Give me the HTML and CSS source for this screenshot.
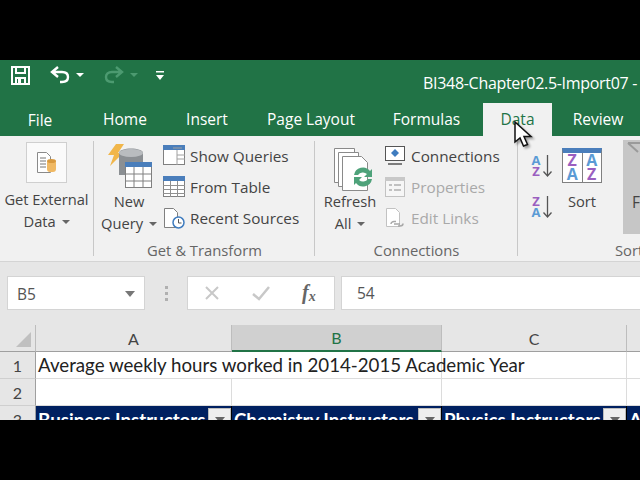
FILE: index.html
```html
<!DOCTYPE html>
<html lang="en">

<head>
    <meta charset="UTF-8">
    <title>BI348-Chapter02.5-Import07 - Excel</title>
    <link rel="stylesheet" href="styles.css">
</head>

<body>
    <div class="window">
        <!-- title bar -->
        <div class="titlebar">
            <div class="qat">
                <svg class="qat-save" width="21" height="20" viewBox="0 0 21 20"><path d="M2 2h17v17H2zM6 2v6h9V2M6 19v-6h9v6" fill="none" stroke="#fff" stroke-width="2"/><rect x="8" y="14" width="3" height="4" fill="#fff"/></svg>
                <svg class="qat-undo" width="22" height="20" viewBox="0 0 22 20"><path d="M9 2 3 7l6 5M3 7h10c4 0 6 2 6 5s-2 5-6 5h-2" fill="none" stroke="#fff" stroke-width="2.4"/></svg>
                <span class="qat-drop"></span>
                <svg class="qat-redo" width="22" height="20" viewBox="0 0 22 20"><path d="M13 2l6 5-6 5M19 7H9c-4 0-6 2-6 5s2 5 6 5h2" fill="none" stroke="#4c9a70" stroke-width="2.4"/></svg>
                <span class="qat-drop dim"></span>
                <svg class="qat-custom" width="10" height="11" viewBox="0 0 10 11"><path d="M1 1h8v1.500H1zM1 5h8L5 10z" fill="#fff"/></svg>
            </div>
            <div class="doc-title">BI348-Chapter02.5-Import07 -</div>
        </div>

        <!-- tabs -->
        <div class="tabs">
            <div class="tab tab-file">File</div>
            <div class="tab tab-home">Home</div>
            <div class="tab tab-insert">Insert</div>
            <div class="tab tab-layout">Page Layout</div>
            <div class="tab tab-formulas">Formulas</div>
            <div class="tab tab-data">Data</div>
            <div class="tab tab-review">Review</div>
        </div>

        <!-- ribbon -->
        <div class="ribbon">
            <div class="group group-external">
                <div class="group-body">
                    <div class="big-btn">
                        <div class="ext-box">
                            <svg width="22" height="24" viewBox="0 0 22 24"><path d="M1.500 1.500h9l4 4v16h-13z" fill="#fff" stroke="#8a8a8a"/><path d="M4 7h6M4 10h6M4 13h6M4 16h6" stroke="#777"/><rect x="11" y="9" width="9" height="12" rx="3" fill="#f0b964"/><ellipse cx="15.500" cy="10" rx="4.500" ry="2" fill="#d99a3f"/></svg>
                        </div>
                        <div class="big-label">Get External</div>
                        <div class="big-label">Data <span class="caret"></span></div>
                    </div>
                </div>
            </div>

            <div class="group group-transform">
                <div class="group-body">
                    <div class="big-btn query-btn">
                        <svg class="big-icon" width="46" height="46" viewBox="0 0 46 46"><path d="M9 1h8l-6 9h5L3 23l4-11H1z" fill="#f1b64a"/><path d="M12 10c0-6 24-6 24 0v22H12z" fill="#8b8f93"/><ellipse cx="24" cy="10" rx="12" ry="4" fill="#b9bcbf"/><rect x="18.500" y="19.500" width="26" height="25" fill="#fff" stroke="#808080"/><rect x="18" y="19" width="27" height="5" fill="#4a7ebb"/><path d="M18 31h27M18 38h27M27 24v20M36 24v20" stroke="#808080"/></svg>
                        <div class="big-label">New</div>
                        <div class="big-label">Query <span class="caret"></span></div>
                    </div>
                    <div class="small-list">
                        <div class="small-row">
                            <svg width="22" height="21" viewBox="0 0 22 21"><rect x=".5" y=".5" width="21" height="19" fill="#fff" stroke="#808080"/><rect width="22" height="5" fill="#4a7ebb"/><path d="M14 5v15M14 10h8M14 14h8M10 3h9" stroke="#a0a0a0"/></svg>
                            <span>Show Queries</span>
                        </div>
                        <div class="small-row">
                            <svg width="22" height="21" viewBox="0 0 22 21"><rect x=".5" y=".5" width="21" height="20" fill="#fff" stroke="#808080"/><rect width="22" height="5" fill="#4a7ebb"/><path d="M0 9.500h22M0 13.500h22M0 17.500h22M7.500 5v16M14.500 5v16" stroke="#909090"/></svg>
                            <span>From Table</span>
                        </div>
                        <div class="small-row">
                            <svg width="22" height="22" viewBox="0 0 22 22"><path d="M1.500 1.500h9l4 4v15h-13z" fill="#fff" stroke="#808080"/><circle cx="15.500" cy="15.500" r="5.500" fill="#fff" stroke="#3f7cbf" stroke-width="1.500"/><path d="M15.500 12v4h3" fill="none" stroke="#555"/></svg>
                            <span>Recent Sources</span>
                        </div>
                    </div>
                </div>
                <div class="group-label">Get &amp; Transform</div>
            </div>

            <div class="group group-connections">
                <div class="group-body">
                    <div class="big-btn refresh-btn">
                        <svg class="big-icon" width="42" height="44" viewBox="0 0 42 44"><path d="M1.500 1.500h20v34h-20z" fill="#fff" stroke="#8a8a8a"/><path d="M5.500 5.500h20v34h-20z" fill="#fff" stroke="#8a8a8a"/><path d="M9.500 9.500h19l6 6v28h-25z" fill="#fff" stroke="#8a8a8a"/><path d="M21 28a9 9 0 0 1 16-4l2-2v8h-8l3-3a6 6 0 0 0-9 1zM39 32a9 9 0 0 1-16 4l-2 2v-8h8l-3 3a6 6 0 0 0 9-1z" fill="#4ea27a"/></svg>
                        <div class="big-label">Refresh</div>
                        <div class="big-label">All <span class="caret"></span></div>
                    </div>
                    <div class="small-list">
                        <div class="small-row">
                            <svg width="20" height="19" viewBox="0 0 20 19"><rect x=".5" y=".5" width="19" height="14" fill="#fff" stroke="#555"/><path d="M3 18h14" stroke="#555" stroke-width="1.500"/><path d="M10 3l4 4-4 4-4-4z" fill="#3f7cbf"/></svg>
                            <span>Connections</span>
                        </div>
                        <div class="small-row off">
                            <svg width="20" height="20" viewBox="0 0 20 20"><rect x=".5" y=".5" width="19" height="19" fill="#f6f6f6" stroke="#c2c2c2"/><rect width="20" height="4" fill="#c8c8c8"/><path d="M4 8h3M4 13h3M9 8h7M9 13h7" stroke="#b0b0b0" stroke-width="1.500"/></svg>
                            <span>Properties</span>
                        </div>
                        <div class="small-row off">
                            <svg width="20" height="22" viewBox="0 0 20 22"><path d="M1.500 1.500h9l4 4v14h-13z" fill="#fff" stroke="#c2c2c2"/><path d="M6 17a3 2.500 0 0 1 3-2.500h2M13 19h2a3 2.500 0 0 0 3-2.500M9 17h6" fill="none" stroke="#a8a8a8" stroke-width="1.500"/></svg>
                            <span>Edit Links</span>
                        </div>
                    </div>
                </div>
                <div class="group-label">Connections</div>
            </div>

            <div class="group group-sort">
                <div class="group-body">
                    <div class="sort-small">
                        <div class="sort-pair">
                            <div class="sort-letters"><span class="blue">A</span><span class="purple">Z</span></div>
                            <svg width="9" height="22" viewBox="0 0 9 22"><path d="M4.500 0v21M.5 16.500l4 4.500 4-4.500" fill="none" stroke="#555" stroke-width="1.300"/></svg>
                        </div>
                        <div class="sort-pair">
                            <div class="sort-letters"><span class="purple">Z</span><span class="blue">A</span></div>
                            <svg width="9" height="22" viewBox="0 0 9 22"><path d="M4.500 0v21M.5 16.500l4 4.500 4-4.500" fill="none" stroke="#555" stroke-width="1.300"/></svg>
                        </div>
                    </div>
                    <div class="big-btn sort-btn">
                        <div class="sort-icon">
                            <div class="sort-col"><span class="purple">Z</span><span class="blue">A</span></div>
                            <div class="sort-col"><span class="blue">A</span><span class="purple">Z</span></div>
                        </div>
                        <div class="big-label">Sort</div>
                    </div>
                    <div class="filter-btn">
                        <svg width="30" height="47" viewBox="0 0 30 47"><path d="M5 3h24M5 3l10 9" fill="none" stroke="#9a9a9a" stroke-width="2"/></svg>
                        <div>F</div>
                    </div>
                </div>
                <div class="group-label sort-label">Sort &amp; Filter</div>
            </div>
        </div>

        <!-- formula bar -->
        <div class="formula-area">
            <div class="name-box">
                <span>B5</span>
                <span class="name-caret"></span>
            </div>
            <div class="grip"><i></i><i></i><i></i></div>
            <div class="fx-box">
                <svg width="16" height="16" viewBox="0 0 16 16"><path d="M2 2l12 12M14 2 2 14" stroke="#c8c8c8" stroke-width="2"/></svg>
                <svg width="20" height="16" viewBox="0 0 20 16"><path d="M2 9l6 5L18 2" fill="none" stroke="#c8c8c8" stroke-width="2.500"/></svg>
                <span class="fx">f<sub>x</sub></span>
            </div>
            <div class="formula-box">54</div>
        </div>

        <!-- sheet -->
        <div class="sheet">
            <div class="col-head corner"><span class="corner-mark"></span></div>
            <div class="col-head">A</div>
            <div class="col-head active">B</div>
            <div class="col-head">C</div>
            <div class="col-head"></div>

            <div class="row-head">1</div>
            <div class="cell title-cell">Average weekly hours worked in 2014-2015 Academic Year</div>
            <div class="cell no-line"></div>
            <div class="cell"></div>
            <div class="cell"></div>

            <div class="row-head">2</div>
            <div class="cell"></div>
            <div class="cell"></div>
            <div class="cell"></div>
            <div class="cell"></div>

            <div class="row-head">3</div>
            <div class="cell head-cell">Business Instructors<span class="filter"></span></div>
            <div class="cell head-cell">Chemistry Instructors<span class="filter"></span></div>
            <div class="cell head-cell">Physics Instructors<span class="filter"></span></div>
            <div class="cell head-cell">A</div>
        </div>

        <!-- mouse pointer -->
        <svg class="pointer" width="20" height="27" viewBox="0 0 20 27"><path d="M2 1v20l5-4 3.500 8 4-1.500-3.500-8h7z" fill="#fff" stroke="#111" stroke-width="1.500"/></svg>
    </div>
</body>

</html>
```

FILE: styles.css
```css
* {
    margin: 0;
    padding: 0;
    box-sizing: border-box;
}

body {
    background: #000;
    padding-top: 60px;
    height: 480px;
    overflow: hidden;
    font-family: "Open Sans", sans-serif;
}

.window {
    position: relative;
    width: 640px;
    height: 360px;
    overflow: hidden;
    background: #e6e6e6;
}

/* title bar */
.titlebar {
    display: flex;
    height: 43px;
    background: #217346;
    padding-left: 10px;
    color: #fff;
}

.qat {
    display: flex;
    align-items: center;
    width: 413px;
    height: 30px;
}

.qat-undo {
    margin-left: 18px;
}

.qat-drop {
    width: 0;
    height: 0;
    margin-left: 5px;
    border-left: 4px solid transparent;
    border-right: 4px solid transparent;
    border-top: 4px solid #fff;
}

.qat-drop.dim {
    border-top-color: #4c9a70;
}

.qat-redo {
    margin-left: 19px;
}

.qat-custom {
    margin-left: 17px;
}

.doc-title {
    font-size: 16px;
    line-height: 46px;
    white-space: nowrap;
    letter-spacing: -0.3px;
}

/* tabs */
.tabs {
    display: flex;
    height: 33px;
    background: #217346;
    color: #fff;
    font-size: 15.500px;
}

.tab {
    display: flex;
    align-items: center;
    justify-content: center;
    padding-bottom: 2px;
    white-space: nowrap;
}

.tab-file { width: 80px; padding-top: 2px; }
.tab-home { width: 90px; }
.tab-insert { width: 74px; }
.tab-layout { width: 134px; }
.tab-formulas { width: 105px; padding-right: 8px; }

.tab-data {
    width: 69px;
    background: #f1f1f1;
    color: #217346;
}

.tab-review { width: 88px; padding-left: 4px; }

/* ribbon */
.ribbon {
    display: flex;
    height: 126px;
    background: #f1f1f1;
    border-bottom: 1px solid #d4d4d4;
    color: #444;
}

.group {
    display: flex;
    flex-direction: column;
    position: relative;
    flex: none;
    padding-top: 4px;
}

.group::after {
    content: "";
    position: absolute;
    right: 0;
    top: 5px;
    bottom: 5px;
    width: 1px;
    background: #c8c8c8;
}

.group-external { width: 94px; }
.group-transform { width: 221px; }
.group-connections { width: 203px; }
.group-sort { width: 122px; }
.group-sort::after { display: none; }

.group-body {
    display: flex;
    height: 100px;
}

.group-label {
    text-align: center;
    font-size: 14.800px;
    line-height: 20px;
    color: #666;
    white-space: nowrap;
}

.big-btn {
    display: flex;
    flex: none;
    flex-direction: column;
    align-items: center;
    font-size: 14.700px;
    line-height: 22px;
    white-space: nowrap;
}

.big-label {
    color: #444;
}

.caret {
    display: inline-block;
    width: 0;
    height: 0;
    margin-left: 2px;
    vertical-align: 3px;
    border-left: 4px solid transparent;
    border-right: 4px solid transparent;
    border-top: 4px solid #666;
}

.group-external .big-btn {
    width: 93px;
}

.ext-box {
    display: flex;
    align-items: center;
    justify-content: center;
    width: 41px;
    height: 41px;
    margin-top: 2px;
    margin-bottom: 5px;
    background: #fafafa;
    border: 1px solid #cfcfcf;
}

.query-btn {
    width: 60px;
    margin-left: 5px;
    margin-right: 4px;
}

.query-btn .big-icon {
    margin-left: 2px;
    margin-top: 3px;
    margin-bottom: 1px;
}

.small-list {
    display: flex;
    flex-direction: column;
}

.small-row {
    display: flex;
    align-items: center;
    gap: 5px;
    height: 31.300px;
    font-size: 15.300px;
    white-space: nowrap;
}

.small-row svg {
    width: 22px;
    flex: none;
}

.small-row.off {
    color: #a9a9a9;
}

.refresh-btn {
    width: 60px;
    margin-left: 5px;
    margin-right: 4px;
}

.refresh-btn .big-icon {
    margin-left: 8px;
    margin-top: 7px;
    margin-bottom: -1px;
}

.sort-small {
    display: flex;
    flex: none;
    flex-direction: column;
    gap: 19px;
    margin-left: 12px;
    padding-top: 15px;
    width: 32px;
}

.sort-pair {
    display: flex;
    align-items: flex-start;
    gap: 1px;
    height: 22px;
}

.sort-letters {
    display: flex;
    flex-direction: column;
    width: 12px;
    font-size: 13px;
    font-weight: 700;
    line-height: 11px;
    text-align: center;
}

.blue { color: #5b9bd5; }
.purple { color: #9a5fc0; }

.sort-btn {
    width: 40px;
}

.sort-icon {
    display: flex;
    width: 40px;
    height: 35px;
    margin-top: 8px;
    margin-bottom: 7px;
    background: #fff;
    border: 1px solid #808080;
    border-top: 5px solid #4a7ebb;
}

.sort-col {
    display: flex;
    flex-direction: column;
    flex: 1;
    font-size: 16px;
    font-weight: 700;
    line-height: 14px;
    text-align: center;
}

.sort-col + .sort-col {
    border-left: 1px solid #808080;
}

.filter-btn {
    flex: none;
    width: 30px;
    height: 94px;
    margin-left: 21px;
    background: #c6c6c6;
    font-size: 15.500px;
    line-height: 22px;
}

.filter-btn svg {
    display: block;
    margin-bottom: 4px;
}

.filter-btn div {
    padding-left: 9px;
}

.sort-label {
    text-align: left;
    padding-left: 97px;
}

/* formula bar */
.formula-area {
    display: flex;
    align-items: flex-start;
    height: 63px;
    padding: 14px 0 0 7px;
    background: #e6e6e6;
}

.name-box {
    display: flex;
    align-items: center;
    justify-content: space-between;
    width: 138px;
    height: 34px;
    padding: 1px 9px 0;
    background: #fff;
    border: 1px solid #d4d4d4;
    font-size: 15.500px;
    color: #555;
}

.name-caret {
    width: 0;
    height: 0;
    border-left: 5px solid transparent;
    border-right: 5px solid transparent;
    border-top: 6px solid #777;
}

.grip {
    display: flex;
    flex-direction: column;
    gap: 3px;
    margin: 10px 19px 0 20px;
}

.grip i {
    display: block;
    width: 3px;
    height: 3px;
    background: #b0b0b0;
}

.fx-box {
    display: flex;
    align-items: center;
    gap: 31px;
    width: 148px;
    height: 34px;
    padding-left: 16px;
    background: #fff;
    border: 1px solid #d4d4d4;
}

.fx {
    font-family: "Liberation Serif", serif;
    font-style: italic;
    font-weight: 700;
    font-size: 20px;
    color: #666;
}

.fx sub {
    font-size: 14px;
    vertical-align: -2px;
}

.formula-box {
    flex: 1;
    height: 34px;
    margin-left: 6px;
    padding-left: 15px;
    background: #fff;
    border: 1px solid #d4d4d4;
    border-right: none;
    font-size: 15.500px;
    line-height: 33px;
    color: #555;
}

/* sheet */
.sheet {
    display: grid;
    grid-template-columns: 36px 196px 210px 185px 1fr;
    grid-auto-rows: 27px;
    font-family: Lato, sans-serif;
    font-size: 18.700px;
    color: #222;
}

.col-head {
    display: flex;
    align-items: center;
    justify-content: center;
    background: #e6e6e6;
    border-right: 1px solid #bdbdbd;
    border-bottom: 1px solid #9f9f9f;
    font-size: 16px;
    color: #444;
}

.col-head.active {
    background: #d0d0d0;
    border-bottom: 2px solid #217346;
    color: #217346;
}

.corner {
    position: relative;
}

.corner-mark {
    position: absolute;
    right: 4px;
    bottom: 4px;
    width: 0;
    height: 0;
    border-left: 15px solid transparent;
    border-bottom: 15px solid #c0c0c0;
}

.row-head {
    display: flex;
    align-items: center;
    justify-content: center;
    background: #e6e6e6;
    border-right: 1px solid #9f9f9f;
    border-bottom: 1px solid #cfcfcf;
    font-size: 16px;
    color: #444;
}

.cell {
    display: flex;
    align-items: center;
    background: #fff;
    border-right: 1px solid #dcdcdc;
    border-bottom: 1px solid #dcdcdc;
    padding-left: 2px;
    white-space: nowrap;
}

.title-cell {
    overflow: visible;
    border-right: none;
    position: relative;
    z-index: 1;
}

.no-line {
    border-right: 1px solid #dcdcdc;
}

.head-cell {
    position: relative;
    background: #002060;
    border-right: 1px solid #000;
    border-bottom: none;
    color: #fff;
    font-weight: 700;
}

.filter {
    position: absolute;
    right: 0;
    top: 2px;
    width: 23px;
    height: 23px;
    background: #eee;
    border: 1px solid #bbb;
}

.filter::after {
    content: "";
    position: absolute;
    left: 6px;
    top: 8px;
    width: 0;
    height: 0;
    border-left: 5px solid transparent;
    border-right: 5px solid transparent;
    border-top: 6px solid #666;
}

.pointer {
    position: absolute;
    left: 513px;
    top: 61px;
    filter: drop-shadow(2px 2px 1px rgba(0, 0, 0, 0.35));
}
```
